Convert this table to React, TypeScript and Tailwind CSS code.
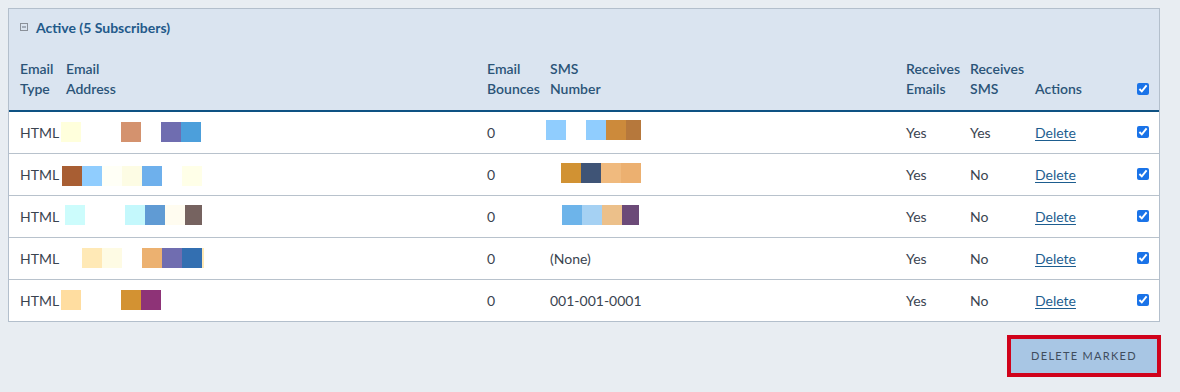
import React from 'react';

type Block = [number, string, number?];

interface Subscriber {
  type: string;
  email: Block[];
  emailTop: number;
  bounces: number;
  sms: Block[] | string;
  smsTop?: number;
  receivesEmails: string;
  receivesSms: string;
}

// redacted cells are drawn as 20px colour tiles, offsets from the cell's left edge
const subscribers: Subscriber[] = [
  {
    type: 'HTML',
    email: [[3, '#ffffdc'], [63, '#d4926e'], [103, '#6f6db0'], [123, '#4c9fdb']],
    emailTop: 10,
    bounces: 0,
    sms: [[4, '#90cdfe'], [44, '#90cdfe'], [64, '#cc8a3b'], [84, '#b6783c', 15]],
    smsTop: 8,
    receivesEmails: 'Yes',
    receivesSms: 'Yes',
  },
  {
    type: 'HTML',
    email: [[4, '#a85e33'], [24, '#90cdfe'], [44, '#fffff6'], [64, '#fdfce4'], [84, '#6eb0ec'], [124, '#ffffe8']],
    emailTop: 12,
    bounces: 0,
    sms: [[19, '#d19233'], [39, '#3f5476'], [59, '#f0ba7e'], [79, '#ecb070']],
    smsTop: 9,
    receivesEmails: 'Yes',
    receivesSms: 'No',
  },
  {
    type: 'HTML',
    email: [[7, '#ccfcfc'], [67, '#c4f8fc'], [87, '#609bd4'], [107, '#fffcf0'], [127, '#766360', 17]],
    emailTop: 9,
    bounces: 0,
    sms: [[20, '#6db4ea'], [40, '#a5d1f3'], [60, '#ecc08a'], [80, '#6c4a78', 17]],
    smsTop: 9,
    receivesEmails: 'Yes',
    receivesSms: 'No',
  },
  {
    type: 'HTML',
    email: [[24, '#ffe9b6'], [44, '#fefbe4'], [84, '#ecb170'], [104, '#706db0'], [124, '#336fb1'], [144, '#ffe9b6', 2]],
    emailTop: 10,
    bounces: 0,
    sms: '(None)',
    receivesEmails: 'Yes',
    receivesSms: 'No',
  },
  {
    type: 'HTML',
    email: [[3, '#ffdda0'], [63, '#d39232'], [83, '#8e3377']],
    emailTop: 10,
    bounces: 0,
    sms: '001-001-0001',
    receivesEmails: 'Yes',
    receivesSms: 'No',
  },
];

const cols = 'grid grid-cols-[49px_421px_63px_356px_64px_65px_102px_30px]';

function Tiles({ blocks, top }: { blocks: Block[]; top: number }) {
  return (
    <div className="relative h-full">
      {blocks.map(([left, color, width], i) => (
        <span
          key={i}
          className="absolute h-5"
          style={{ left, top, width: width ?? 20, backgroundColor: color }}
        />
      ))}
    </div>
  );
}

function Check() {
  return (
    <input
      type="checkbox"
      checked
      readOnly
      className="m-0 h-[12px] w-[12px] accent-[#1a73e8]"
    />
  );
}

export default function App() {
  return (
    <div
      className="min-h-[392px] bg-[#e8edf2] pt-2 pl-2 text-[14px] text-[#3a4450]"
      style={{ fontFamily: 'Lato, "Open Sans", sans-serif' }}
    >
      <div className="w-[1152px] border border-[#b3bfcc] bg-white">
        {/* Panel header */}
        <div className="bg-[#dae4f0]">
          <div className="flex h-[40px] items-center gap-[8px] pb-[4px] pl-[11px] font-bold text-[#22598a]">
            <svg width="8" height="8" viewBox="0 0 8 8" className="shrink-0">
              <rect x="0.5" y="0.5" width="7" height="7" fill="none" stroke="#8a9099" />
              <path d="M2 4h4" stroke="#6b7280" />
            </svg>
            <span>Active (5 Subscribers)</span>
          </div>
          <div className={`${cols} h-[61px] items-end pb-[11px] font-semibold leading-[20px] text-[#2b5478]`}>
            <div className="pl-[11px]">Email<br />Type</div>
            <div className="pl-[8px]">Email<br />Address</div>
            <div className="pl-[8px]">Email<br />Bounces</div>
            <div className="pl-[8px]">SMS<br />Number</div>
            <div className="pl-[8px]">Receives<br />Emails</div>
            <div className="pl-[8px]">Receives<br />SMS</div>
            <div className="pl-[8px]">Actions</div>
            <div className="flex justify-center pb-[4px] pr-[2px]"><Check /></div>
          </div>
        </div>
        <div className="h-[2px] bg-[#0e5283]" />

        {/* Rows */}
        {subscribers.map((s, i) => {
          const last = i === subscribers.length - 1;
          return (
            <div
              key={i}
              className={`${cols} items-center ${last ? 'h-[41px]' : 'h-[42px] border-b border-[#b8c2cc]'}`}
            >
              <div className="pl-[11px]">{s.type}</div>
              <div className="h-full">
                <Tiles blocks={s.email} top={s.emailTop} />
              </div>
              <div className="pl-[8px]">{s.bounces}</div>
              {typeof s.sms === 'string' ? (
                <div className="pl-[8px]">{s.sms}</div>
              ) : (
                <div className="h-full">
                  <Tiles blocks={s.sms} top={s.smsTop ?? 10} />
                </div>
              )}
              <div className="pl-[8px]">{s.receivesEmails}</div>
              <div className="pl-[8px]">{s.receivesSms}</div>
              <div className="pl-[8px]">
                <a href="#" className="text-[#1d5d8f] underline underline-offset-2">Delete</a>
              </div>
              <div className="flex justify-center pb-[1px] pr-[2px]"><Check /></div>
            </div>
          );
        })}
      </div>

      <div className="flex w-[1153px] justify-end pt-[13px]">
        <button className="h-[42px] w-[154px] border-[4px] border-[#d0021b] bg-[#a8c6e4] text-[11px] tracking-[1.3px] text-[#3f4d5e]">
          DELETE MARKED
        </button>
      </div>
    </div>
  );
}
